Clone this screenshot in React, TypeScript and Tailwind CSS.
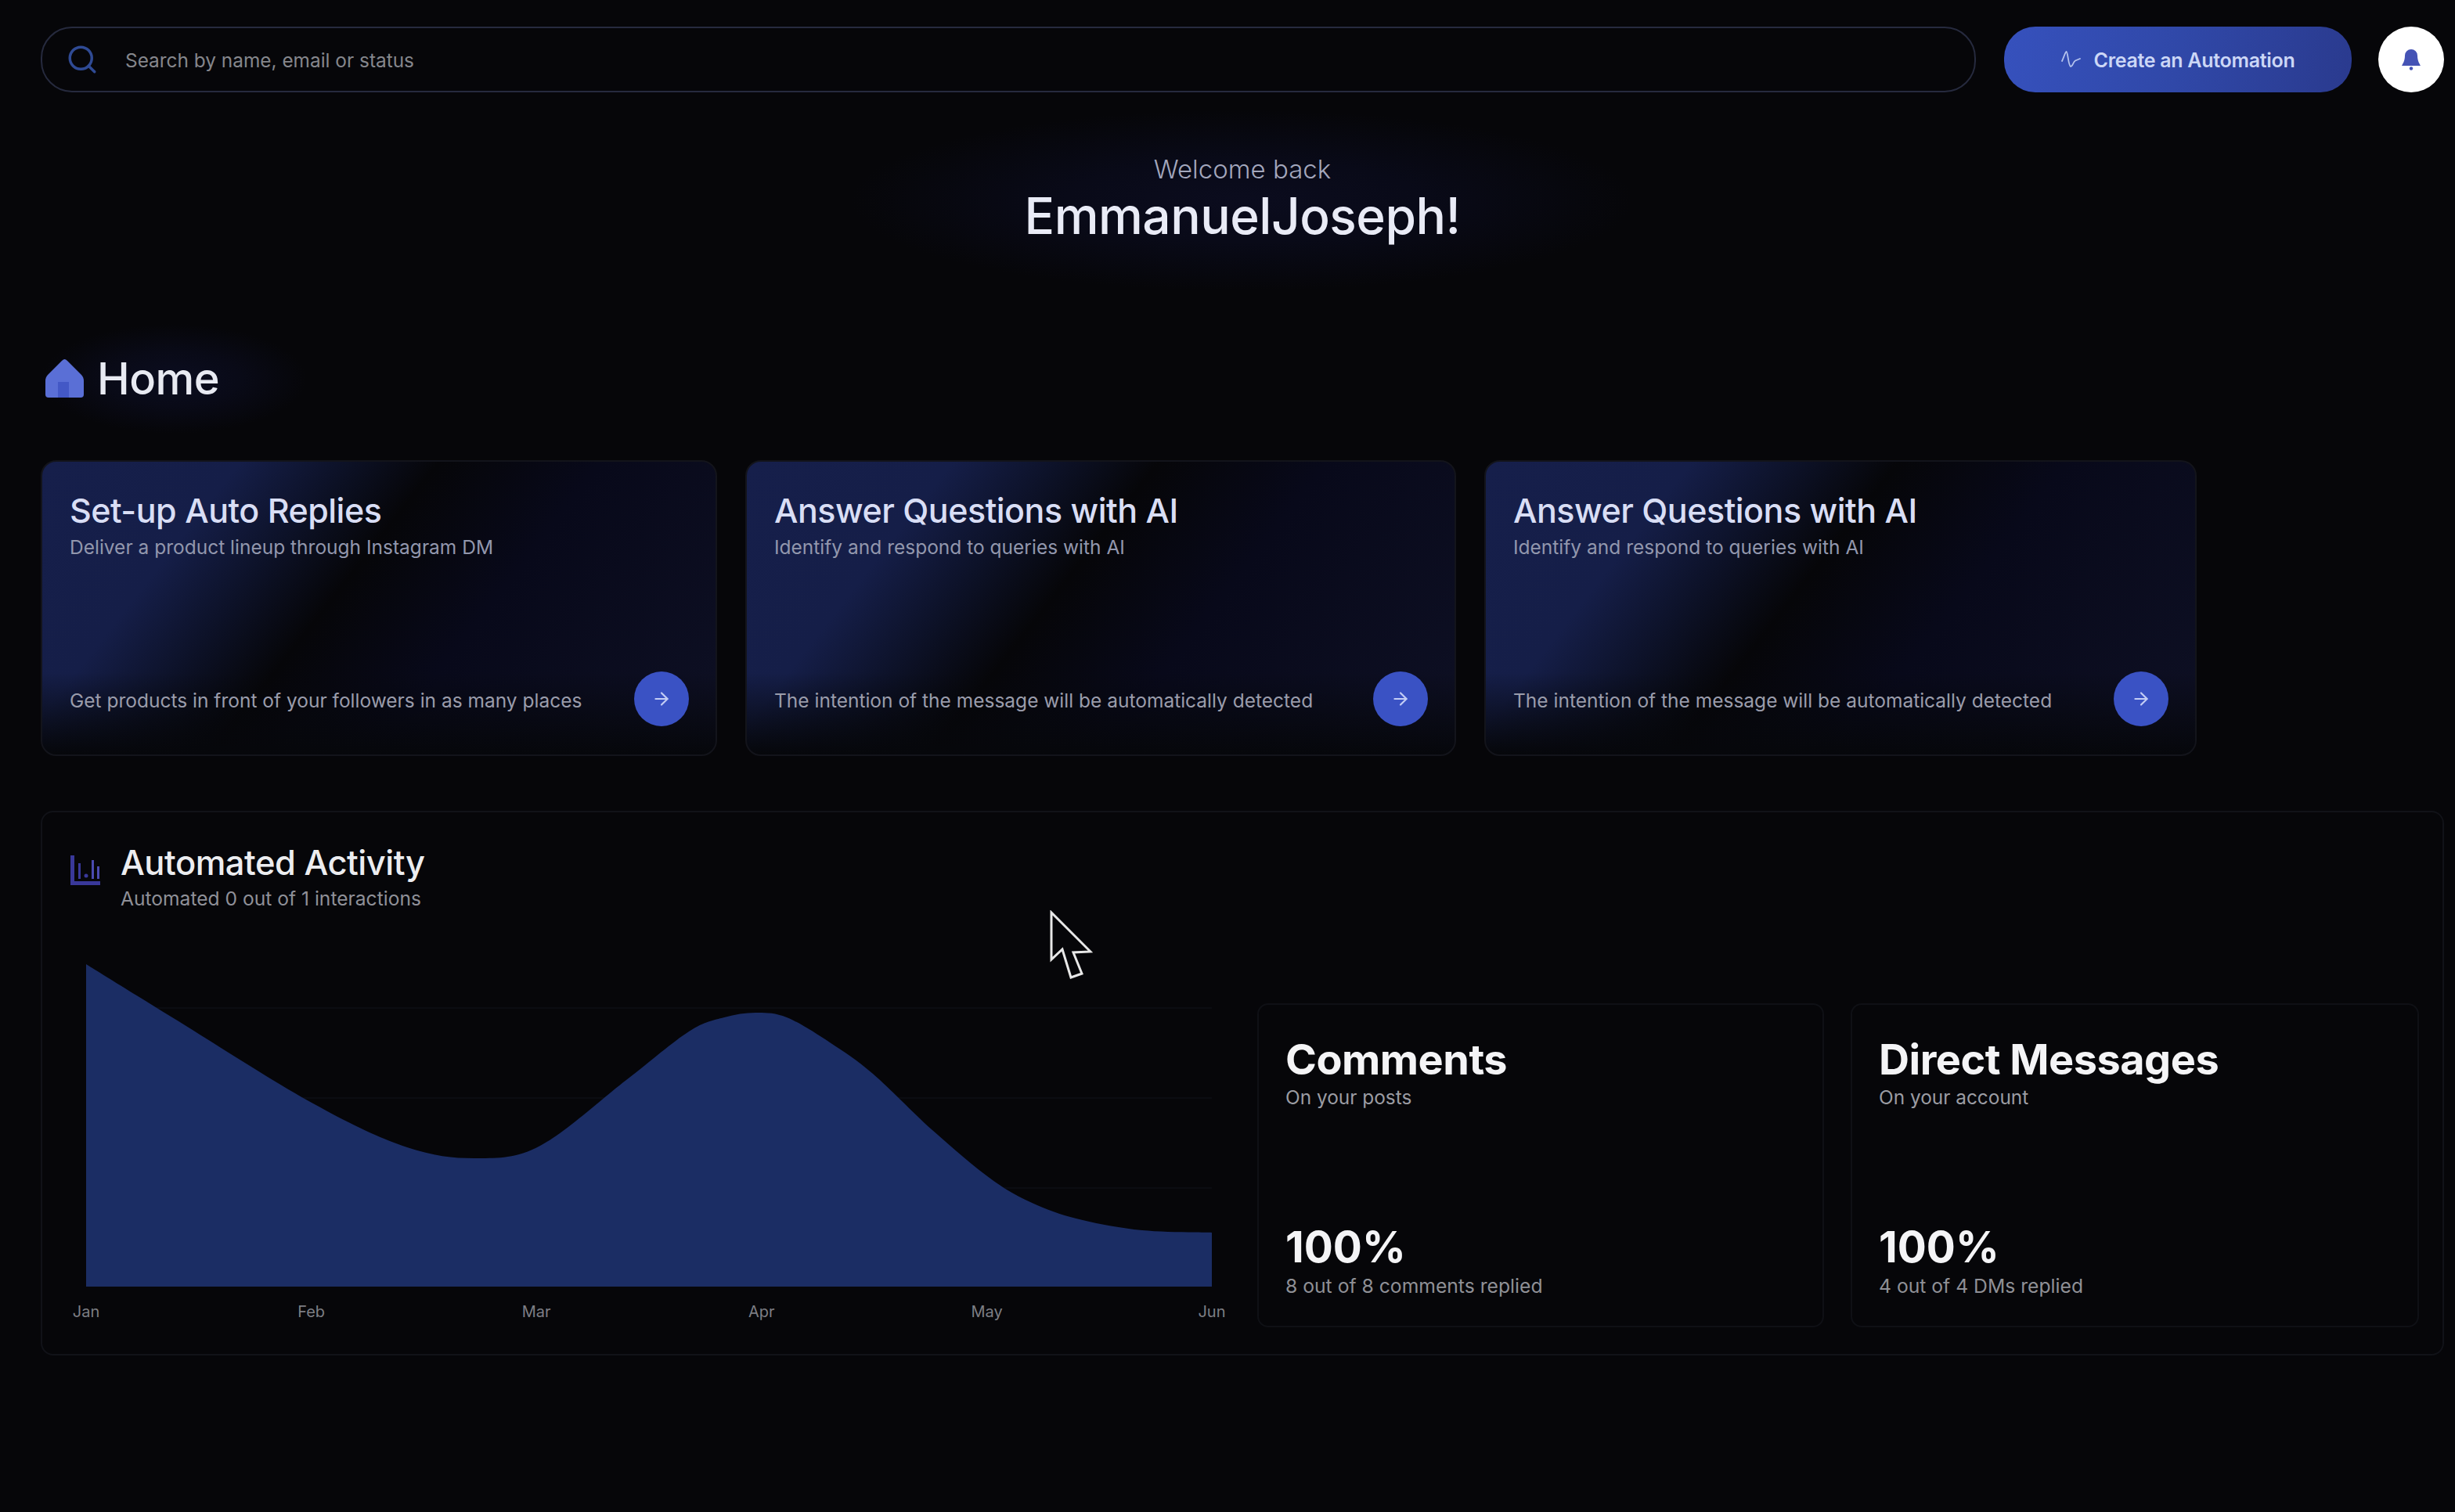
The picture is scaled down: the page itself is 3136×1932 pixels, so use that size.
import { ArrowRight, Search } from "lucide-react";

const months = ["Jan", "Feb", "Mar", "Apr", "May", "Jun"];

// area outline, in svg coordinates
const curve: [number, number][] = [
  [20, 0], [130, 68], [310, 178], [430, 234], [520, 248], [600, 232], [710, 148], [790, 86], [835, 68], [875, 62],
  [915, 68], [970, 100], [1025, 140], [1101, 212], [1178, 276], [1235, 308], [1293, 327], [1369, 340], [1458, 343],
];

const buildArea = (pts: [number, number][], bottom: number) => {
  let d = `M${pts[0][0]} ${bottom} L${pts[0][0]} ${pts[0][1]}`;
  for (let i = 0; i < pts.length - 1; i++) {
    const p0 = pts[Math.max(i - 1, 0)];
    const p1 = pts[i];
    const p2 = pts[i + 1];
    const p3 = pts[Math.min(i + 2, pts.length - 1)];
    const c1x = p1[0] + (p2[0] - p0[0]) / 6;
    const c1y = p1[1] + (p2[1] - p0[1]) / 6;
    const c2x = p2[0] - (p3[0] - p1[0]) / 6;
    const c2y = p2[1] - (p3[1] - p1[1]) / 6;
    d += ` C${c1x} ${c1y} ${c2x} ${c2y} ${p2[0]} ${p2[1]}`;
  }
  return `${d} L${pts[pts.length - 1][0]} ${bottom} Z`;
};

const FeatureCard = ({ title, sub, foot, width }: { title: string; sub: string; foot: string; width: string }) => (
  <div
    className={`${width} h-[378px] rounded-[20px] border-2 border-[#13141b] bg-[linear-gradient(to_bottom,transparent_72%,#06070b_100%),linear-gradient(128deg,#161f4b_0%,#151e48_22%,#0d1229_33%,#060609_44%,#08091a_62%,#0e1024_100%)] pl-[35px] pr-[34px] pt-[36px] pb-[36px] flex flex-col justify-between`}
  >
    <div>
      <h3 className="text-[43px] leading-[52px] font-medium text-[#d9def5] tracking-[-0.5px]">{title}</h3>
      <p className="text-[24.5px] leading-[32px] text-[#9297ad] mt-[5px]">{sub}</p>
    </div>
    <div className="flex items-center justify-between">
      <p className="text-[24.5px] leading-[32px] text-[#9a9cab] mt-[3px]">{foot}</p>
      <div className="w-[70px] h-[70px] rounded-full bg-[#3a52c4] flex items-center justify-center">
        <ArrowRight className="w-[26px] h-[26px] text-[#c4cef5]" strokeWidth={2} />
      </div>
    </div>
  </div>
);

const StatCard = ({ title, sub, foot, width }: { title: string; sub: string; foot: string; width: string }) => (
  <div className={`${width} h-[414px] rounded-[14px] border-2 border-[#0f1015] pl-[34px] pt-[36px] flex flex-col`}>
    <h4 className="text-[54px] leading-[68px] font-bold text-[#f4f4f6] tracking-[-0.5px]">{title}</h4>
    <p className="text-[24.4px] leading-[30px] text-[#9b9ca3] -mt-[1px]">{sub}</p>
    <div className="mt-[144px] text-[55px] leading-[64px] font-bold text-[#f4f4f6]">100%</div>
    <p className="text-[24.7px] leading-[32px] text-[#8f9096] mt-[2px]">{foot}</p>
  </div>
);

export default function App() {
  return (
    <div className="relative min-h-screen bg-[#060609] pl-[52px] pr-[14px] pt-[34px] font-['Inter',sans-serif] overflow-hidden">
      {/* top bar */}
      <div className="flex items-center">
        <div className="flex-1 h-[84px] rounded-[40px] border-2 border-[#262a3e] flex items-center pl-[30px]">
          <Search className="w-[42px] h-[42px] text-[#2f4a94]" strokeWidth={2} />
          <span className="ml-[34px] mt-[3px] text-[24.4px] text-[#85868c]">Search by name, email or status</span>
        </div>
        <button className="ml-[36px] w-[444px] h-[84px] rounded-[40px] bg-[linear-gradient(100deg,#3651bd_0%,#3048a8_50%,#2a3a8e_100%)] flex items-center justify-center gap-[16px]">
          <svg width="26" height="24" viewBox="0 0 26 24" fill="none" stroke="#b6c4ee" strokeWidth="1.8" strokeLinecap="round">
            <path d="M1 14 C3 10 5 3 6.5 2 C8.5 2 9 20 12 21 C15 21 15 15 18 13.5 L24 11" />
          </svg>
          <span className="mt-[3px] text-[25px] font-semibold text-[#ccd7f6] tracking-[-0.3px]">Create an Automation</span>
        </button>
        <div className="ml-[34px] w-[84px] h-[84px] rounded-full bg-white flex items-center justify-center">
          <svg width="24" height="28" viewBox="0 0 24 28" fill="#4553b5">
            <path d="M12 1a8 8 0 0 0-8 8c0 7-3 11-4 13h24c-1-2-4-6-4-13a8 8 0 0 0-8-8z" />
            <circle cx="12" cy="25.5" r="2.2" />
          </svg>
        </div>
      </div>

      {/* welcome */}
      <div className="mt-[22px] mx-auto w-[1000px] pt-[56px] pb-[56px] flex flex-col items-center bg-[radial-gradient(ellipse_closest-side,#0b0c1e_0%,#090a18_45%,transparent_100%)]">
        <p className="text-[33px] leading-[40px] font-light text-[#a3a7bd]">Welcome back</p>
        <h1 className="text-[64px] leading-[80px] font-medium text-[#e9ebf6] tracking-[-0.5px]">EmmanuelJoseph!</h1>
      </div>

      {/* home */}
      <div className="mt-[42px] w-[340px] h-[140px] flex items-center gap-[17px] pl-[6px] bg-[radial-gradient(ellipse_closest-side,#0b0d20_0%,#090a17_50%,transparent_100%)]">
        <svg width="49" height="50" viewBox="0 0 49 50">
          <path d="M24.5 0 Q26 0 28 2 L46 20 Q49 23 49 28 V45 Q49 49 45 49 H4 Q0 49 0 45 V28 Q0 23 3 20 L21 2 Q23 0 24.5 0 Z" fill="#5a6fd6" />
          <rect x="16" y="29" width="14" height="20" fill="#4358c6" />
        </svg>
        <h2 className="text-[56px] leading-[70px] font-medium text-[#e8eaf2] tracking-[-0.5px]">Home</h2>
      </div>

      {/* feature cards */}
      <div className="mt-[34px] flex gap-[36px]">
        <FeatureCard
          width="w-[864px]"
          title="Set-up Auto Replies"
          sub="Deliver a product lineup through Instagram DM"
          foot="Get products in front of your followers in as many places"
        />
        <FeatureCard
          width="w-[908px]"
          title="Answer Questions with AI"
          sub="Identify and respond to queries with AI"
          foot="The intention of the message will be automatically detected"
        />
        <FeatureCard
          width="w-[910px]"
          title="Answer Questions with AI"
          sub="Identify and respond to queries with AI"
          foot="The intention of the message will be automatically detected"
        />
      </div>

      {/* automated activity */}
      <div className="mt-[70px] h-[696px] rounded-[16px] border-2 border-[#111218] pl-[36px] pr-[30px] pt-[38px] flex flex-col justify-between pb-[34px]">
        <div className="flex items-center gap-[26px]">
          <svg width="38" height="38" viewBox="0 0 38 38" className="-mt-[16px]" fill="#39389a">
            <rect x="0" y="0" width="5" height="38" />
            <rect x="0" y="33" width="38" height="5" />
            <rect x="10" y="10" width="3" height="20" />
            <circle cx="20" cy="26" r="2.5" />
            <rect x="27" y="6" width="3" height="24" fill="#4a4ab0" />
            <rect x="34" y="14" width="3" height="16" fill="#4a4ab0" />
          </svg>
          <div>
            <h3 className="text-[43.5px] leading-[52px] font-medium text-[#ecedf0] tracking-[-0.5px]">Automated Activity</h3>
            <p className="text-[24.6px] leading-[32px] text-[#8f9098] mt-[4px]">Automated 0 out of 1 interactions</p>
          </div>
        </div>

        <div className="flex items-end">
          <div className="w-[1490px] mb-[8px]">
            <svg width="1490" height="412" viewBox="0 0 1490 412" className="block">
              {[56, 171, 286, 401].map((y) => (
                <line key={y} x1="20" x2="1458" y1={y} y2={y} stroke="#0b0c11" strokeWidth="2" />
              ))}
              <path d={buildArea(curve, 412)} fill="#1b2d64" />
            </svg>
            <div className="mt-[20px] w-[1478px] flex justify-between">
              {months.map((m) => (
                <span key={m} className="w-[40px] text-center text-[20px] leading-[24px] text-[#7d7e84]">{m}</span>
              ))}
            </div>
          </div>
          <div className="ml-[26px] flex gap-[34px]">
            <StatCard width="w-[724px]" title="Comments" sub="On your posts" foot="8 out of 8 comments replied" />
            <StatCard width="w-[726px]" title="Direct Messages" sub="On your account" foot="4 out of 4 DMs replied" />
          </div>
        </div>
      </div>

      {/* pointer */}
      <svg
        width="56"
        height="92"
        viewBox="0 0 56 92"
        className="absolute left-[1340px] top-[1163px]"
        fill="#060609"
        stroke="#e8e8e8"
        strokeWidth="3"
      >
        <path d="M3 3 V63 L17 50 L28 86 L42 81 L31 54 L53 53 Z" />
      </svg>
    </div>
  );
}
